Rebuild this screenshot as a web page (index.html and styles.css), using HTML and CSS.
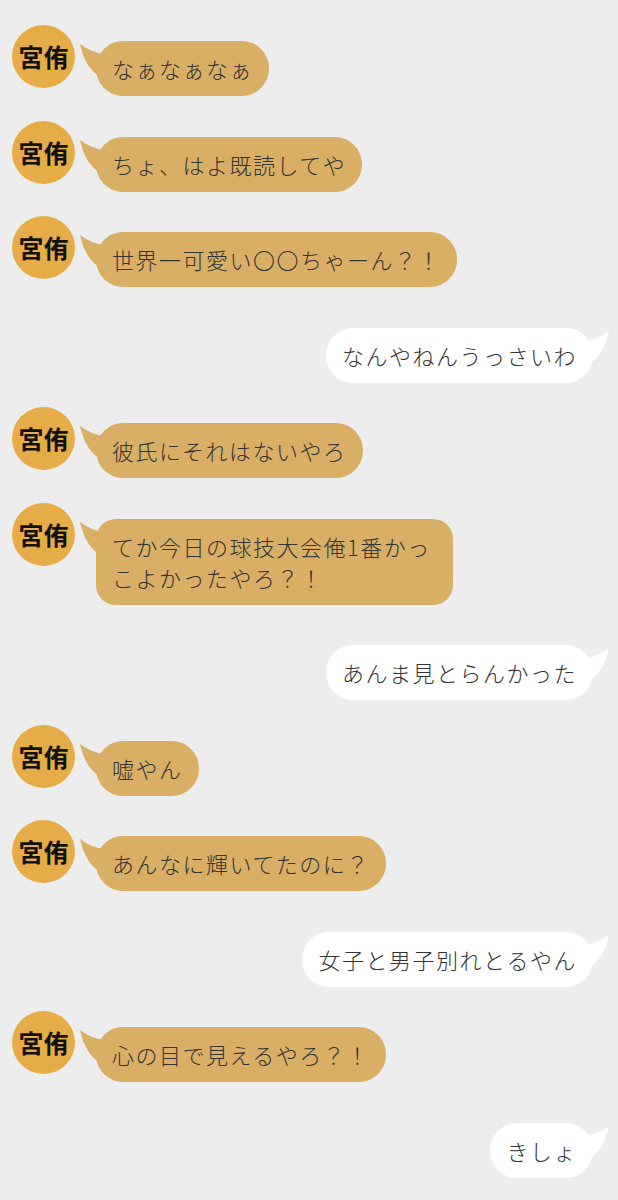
FILE: index.html
```html
<!DOCTYPE html>
<html lang="ja">
<head>
<meta charset="utf-8">
<link rel="stylesheet" href="styles.css">
</head>
<body>
<div class="chat">
  <div class="row in"><div class="avatar">宮侑</div><div class="bubble">なぁなぁなぁ<svg class="tail" viewBox="0 0 24 40"><path d="M1 3 Q12 11 24 13 L24 37 Q7 30 1 3 Z"/></svg></div></div>
  <div class="row in"><div class="avatar">宮侑</div><div class="bubble">ちょ、はよ既読してや<svg class="tail" viewBox="0 0 24 40"><path d="M1 3 Q12 11 24 13 L24 37 Q7 30 1 3 Z"/></svg></div></div>
  <div class="row in"><div class="avatar">宮侑</div><div class="bubble">世界一可愛い〇〇ちゃーん？！<svg class="tail" viewBox="0 0 24 40"><path d="M1 3 Q12 11 24 13 L24 37 Q7 30 1 3 Z"/></svg></div></div>
  <div class="row out"><div class="bubble">なんやねんうっさいわ<svg class="tail" viewBox="0 0 24 40"><path d="M1 3 Q12 11 24 13 L24 37 Q7 30 1 3 Z"/></svg></div></div>
  <div class="row in"><div class="avatar">宮侑</div><div class="bubble">彼氏にそれはないやろ<svg class="tail" viewBox="0 0 24 40"><path d="M1 3 Q12 11 24 13 L24 37 Q7 30 1 3 Z"/></svg></div></div>
  <div class="row in"><div class="avatar">宮侑</div><div class="bubble multi">てか今日の球技大会俺1番かっこよかったやろ？！<svg class="tail" viewBox="0 0 24 40"><path d="M1 3 Q12 11 24 13 L24 37 Q7 30 1 3 Z"/></svg></div></div>
  <div class="row out"><div class="bubble">あんま見とらんかった<svg class="tail" viewBox="0 0 24 40"><path d="M1 3 Q12 11 24 13 L24 37 Q7 30 1 3 Z"/></svg></div></div>
  <div class="row in"><div class="avatar">宮侑</div><div class="bubble">嘘やん<svg class="tail" viewBox="0 0 24 40"><path d="M1 3 Q12 11 24 13 L24 37 Q7 30 1 3 Z"/></svg></div></div>
  <div class="row in"><div class="avatar">宮侑</div><div class="bubble">あんなに輝いてたのに？<svg class="tail" viewBox="0 0 24 40"><path d="M1 3 Q12 11 24 13 L24 37 Q7 30 1 3 Z"/></svg></div></div>
  <div class="row out"><div class="bubble">女子と男子別れとるやん<svg class="tail" viewBox="0 0 24 40"><path d="M1 3 Q12 11 24 13 L24 37 Q7 30 1 3 Z"/></svg></div></div>
  <div class="row in"><div class="avatar">宮侑</div><div class="bubble">心の目で見えるやろ？！<svg class="tail" viewBox="0 0 24 40"><path d="M1 3 Q12 11 24 13 L24 37 Q7 30 1 3 Z"/></svg></div></div>
  <div class="row out"><div class="bubble">きしょ<svg class="tail" viewBox="0 0 24 40"><path d="M1 3 Q12 11 24 13 L24 37 Q7 30 1 3 Z"/></svg></div></div>
</div>
</body>
</html>
```
FILE: styles.css
```css
html, body {
  margin: 0;
  background: #ededed;
}
body {
  font-family: "Noto Sans CJK JP", "Noto Sans", sans-serif;
  height: 1200px;
  overflow: hidden;
}
.chat {
  display: flex;
  flex-direction: column;
  gap: 40.5px;
  padding: 41px 25px 0 12px;
}
.row {
  display: flex;
  align-items: flex-start;
}
.row.out {
  justify-content: flex-end;
}
.avatar {
  flex: none;
  width: 63px;
  height: 63px;
  margin-top: -16px;
  margin-right: 21px;
  border-radius: 50%;
  background: #e6ac47;
  color: #111;
  font-weight: 700;
  font-size: 25px;
  line-height: 1;
  display: flex;
  align-items: center;
  justify-content: center;
}
.bubble {
  position: relative;
  box-sizing: border-box;
  padding: 12px 16px;
  font-size: 22px;
  font-weight: 300;
  line-height: 31px;
  letter-spacing: 1.5px;
  color: #333;
  border-radius: 27px;
  white-space: nowrap;
}
.bubble.multi {
  max-width: 357px;
  white-space: normal;
  border-radius: 20px;
}
.in .bubble {
  background: #d9af65;
}
.out .bubble {
  background: #fff;
}
.tail {
  position: absolute;
  top: 0;
  width: 24px;
  height: 40px;
}
.in .tail {
  left: -17px;
  fill: #d9af65;
}
.out .tail {
  right: -17px;
  transform: scaleX(-1);
  fill: #fff;
}
```
